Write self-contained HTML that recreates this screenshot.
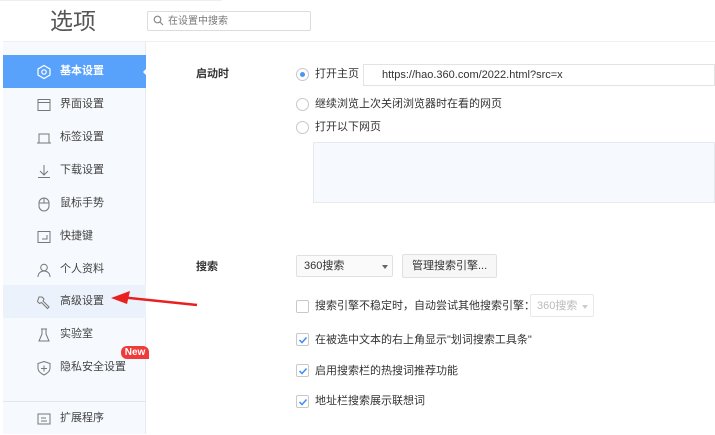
<!DOCTYPE html>
<html><head><meta charset="utf-8"><style>
*{margin:0;padding:0;box-sizing:border-box}
body{width:715px;height:434px;overflow:hidden;background:#fff;font-family:"Liberation Sans","Noto Sans CJK SC",sans-serif;font-size:11px;color:#333;position:relative}
.a{position:absolute}
.side{left:3px;top:42px;width:143px;height:392px;background:#f6f9fd;border-right:1px solid #e8ecf1}
.it{position:absolute;left:0;width:143px;height:33px;line-height:33px;padding-left:57px;font-size:11px;color:#444}
.it svg{position:absolute;left:33px;top:9px}
.radio{position:absolute;width:13px;height:13px;border:1px solid #c8c8c8;border-radius:50%;background:#fff}
.cb{position:absolute;width:13px;height:13px;border:1px solid #c8c8c8;border-radius:2px;background:#fff}
.t{position:absolute;font-size:11px;color:#333;white-space:nowrap;line-height:15px}
</style></head><body>
<div class="a" style="left:0;top:0;width:222px;height:1px;background:#eee"></div>
<div class="t" style="left:50px;top:8px;font-size:23px;line-height:26px;color:#555">选项</div>
<div class="a" style="left:147px;top:11px;width:164px;height:20px;border:1px solid #dcdcdc;border-radius:2px"></div>
<svg class="a" style="left:153px;top:15px" width="11" height="11"><circle cx="4.5" cy="4.5" r="3.3" fill="none" stroke="#888" stroke-width="1.2"/><line x1="7" y1="7" x2="10" y2="10" stroke="#888" stroke-width="1.2"/></svg>
<div class="t" style="left:168px;top:14px;font-size:10px;color:#777">在设置中搜索</div>
<div class="a" style="left:3px;top:41px;width:712px;height:1px;background:#eef0f3"></div>
<div class="a side">
<div class="it" style="top:13px;background:#58a2fb;color:#fff;font-weight:bold"><svg width="16" height="16"><path d="M8 1.5L14 5v6L8 14.5 2 11V5z" fill="none" stroke="#fff" stroke-width="1.2"/><circle cx="8" cy="8" r="2.2" fill="none" stroke="#fff" stroke-width="1.2"/></svg>基本设置</div>
<div class="a" style="left:140px;top:25px;width:0;height:0;border-top:5px solid transparent;border-bottom:5px solid transparent;border-right:5px solid #fff"></div>
<div class="it" style="top:46px"><svg width="16" height="16"><rect x="2" y="2.5" width="12" height="11" fill="none" stroke="#777"/><line x1="2" y1="5.5" x2="14" y2="5.5" stroke="#777"/></svg>界面设置</div>
<div class="it" style="top:79px"><svg width="16" height="16"><path d="M3 13V4h10v9M1 13h14" fill="none" stroke="#777"/></svg>标签设置</div>
<div class="it" style="top:112px"><svg width="16" height="16"><path d="M8 2v10M4 8l4 4 4-4M2 14.5h12" fill="none" stroke="#777"/></svg>下载设置</div>
<div class="it" style="top:145px"><svg width="16" height="16"><rect x="3" y="2" width="10" height="13" rx="5" fill="none" stroke="#777"/><path d="M8 2v5M3 7h10" stroke="#777"/></svg>鼠标手势</div>
<div class="it" style="top:178px"><svg width="16" height="16"><rect x="2" y="2.5" width="12" height="11" fill="none" stroke="#777"/><path d="M11 6v4H6" fill="none" stroke="#777"/></svg>快捷键</div>
<div class="it" style="top:211px"><svg width="16" height="16"><circle cx="8" cy="5.5" r="3.3" fill="none" stroke="#777"/><path d="M2 15c0-4 3-6 6-6s6 2 6 6" fill="none" stroke="#777"/></svg>个人资料</div>
<div class="it" style="top:243px;background:#ebf2fb"><svg width="16" height="16"><path d="M3 3l3 0 2 2-1 2 6 6-1.5 1.5-6-6-2 1-2-2z" fill="none" stroke="#777"/></svg>高级设置</div>
<div class="it" style="top:276px"><svg width="16" height="16"><path d="M5 2h6M6 2v5l-3 7h10l-3-7V2" fill="none" stroke="#777"/></svg>实验室</div>
<div class="it" style="top:309px"><svg width="16" height="16"><path d="M8 1.5l6 2v5c0 3-3 5-6 6.5-3-1.5-6-3.5-6-6.5v-5z" fill="none" stroke="#777"/><path d="M8 5.5v6M5 8.5h6" stroke="#777"/></svg>隐私安全设置</div>
<div class="a" style="left:118px;top:304px;width:28px;height:13px;background:#f03b3b;border-radius:6px 6px 0 6px;color:#fff;font-size:10px;font-weight:bold;line-height:13px;text-align:center">New</div>
<div class="a" style="left:0;top:359px;width:143px;height:1px;background:#e3e7ec"></div>
<div class="it" style="top:360px"><svg width="16" height="16"><rect x="2" y="3" width="12" height="10" fill="none" stroke="#777"/><path d="M5 7h5M5 10h6" stroke="#777"/></svg>扩展程序</div>
</div>
<svg class="a" style="left:100px;top:285px" width="110" height="30"><path d="M97 20L20 12" stroke="#e82020" stroke-width="2.5"/><path d="M11 13L30 6 27 19z" fill="#e82020"/></svg>

<div class="t" style="left:196px;top:67px;font-weight:bold">启动时</div>
<div class="radio" style="left:296px;top:68px"><div class="a" style="left:3px;top:3px;width:5px;height:5px;border-radius:50%;background:#4a96f5"></div></div>
<div class="t" style="left:315px;top:67px">打开主页</div>
<div class="a" style="left:363px;top:64px;width:352px;height:22px;border:1px solid #e3e3e3"></div>
<div class="t" style="left:382px;top:68px">https://hao.360.com/2022.html?src=x</div>
<div class="radio" style="left:296px;top:98px"></div>
<div class="t" style="left:315px;top:97px">继续浏览上次关闭浏览器时在看的网页</div>
<div class="radio" style="left:296px;top:121px"></div>
<div class="t" style="left:315px;top:120px">打开以下网页</div>
<div class="a" style="left:313px;top:142px;width:402px;height:61px;border:1px solid #e6e9ee;background:#f6f9fd"></div>

<div class="t" style="left:196px;top:260px;font-weight:bold">搜索</div>
<div class="a" style="left:296px;top:255px;width:97px;height:22px;border:1px solid #e0e0e0;border-radius:2px;background:#fafafa"></div>
<div class="t" style="left:304px;top:259px">360搜索</div>
<div class="a" style="left:382px;top:265px;border-left:3px solid transparent;border-right:3px solid transparent;border-top:4px solid #666"></div>
<div class="a" style="left:402px;top:254px;width:95px;height:24px;border:1px solid #e0e0e0;border-radius:2px;background:#f7f7f7"></div>
<div class="t" style="left:412px;top:259px">管理搜索引擎...</div>
<div class="cb" style="left:296px;top:300px"></div>
<div class="t" style="left:315px;top:299px">搜索引擎不稳定时，自动尝试其他搜索引擎：</div>
<div class="a" style="left:530px;top:294px;width:64px;height:23px;border:1px solid #e8e8e8;border-radius:2px"></div>
<div class="t" style="left:537px;top:299px;color:#bbb">360搜索</div>
<div class="a" style="left:582px;top:305px;border-left:3px solid transparent;border-right:3px solid transparent;border-top:4px solid #ccc"></div>
<div class="cb" style="left:296px;top:333px"><svg class="a" style="left:1px;top:1px" width="10" height="10"><path d="M1.5 5l2.5 2.5 4.5-5" fill="none" stroke="#3d8ef0" stroke-width="1.5"/></svg></div>
<div class="t" style="left:315px;top:333px">在被选中文本的右上角显示"划词搜索工具条"</div>
<div class="cb" style="left:296px;top:364px"><svg class="a" style="left:1px;top:1px" width="10" height="10"><path d="M1.5 5l2.5 2.5 4.5-5" fill="none" stroke="#3d8ef0" stroke-width="1.5"/></svg></div>
<div class="t" style="left:315px;top:364px">启用搜索栏的热搜词推荐功能</div>
<div class="cb" style="left:296px;top:395px"><svg class="a" style="left:1px;top:1px" width="10" height="10"><path d="M1.5 5l2.5 2.5 4.5-5" fill="none" stroke="#3d8ef0" stroke-width="1.5"/></svg></div>
<div class="t" style="left:315px;top:394px">地址栏搜索展示联想词</div>
</body></html>
